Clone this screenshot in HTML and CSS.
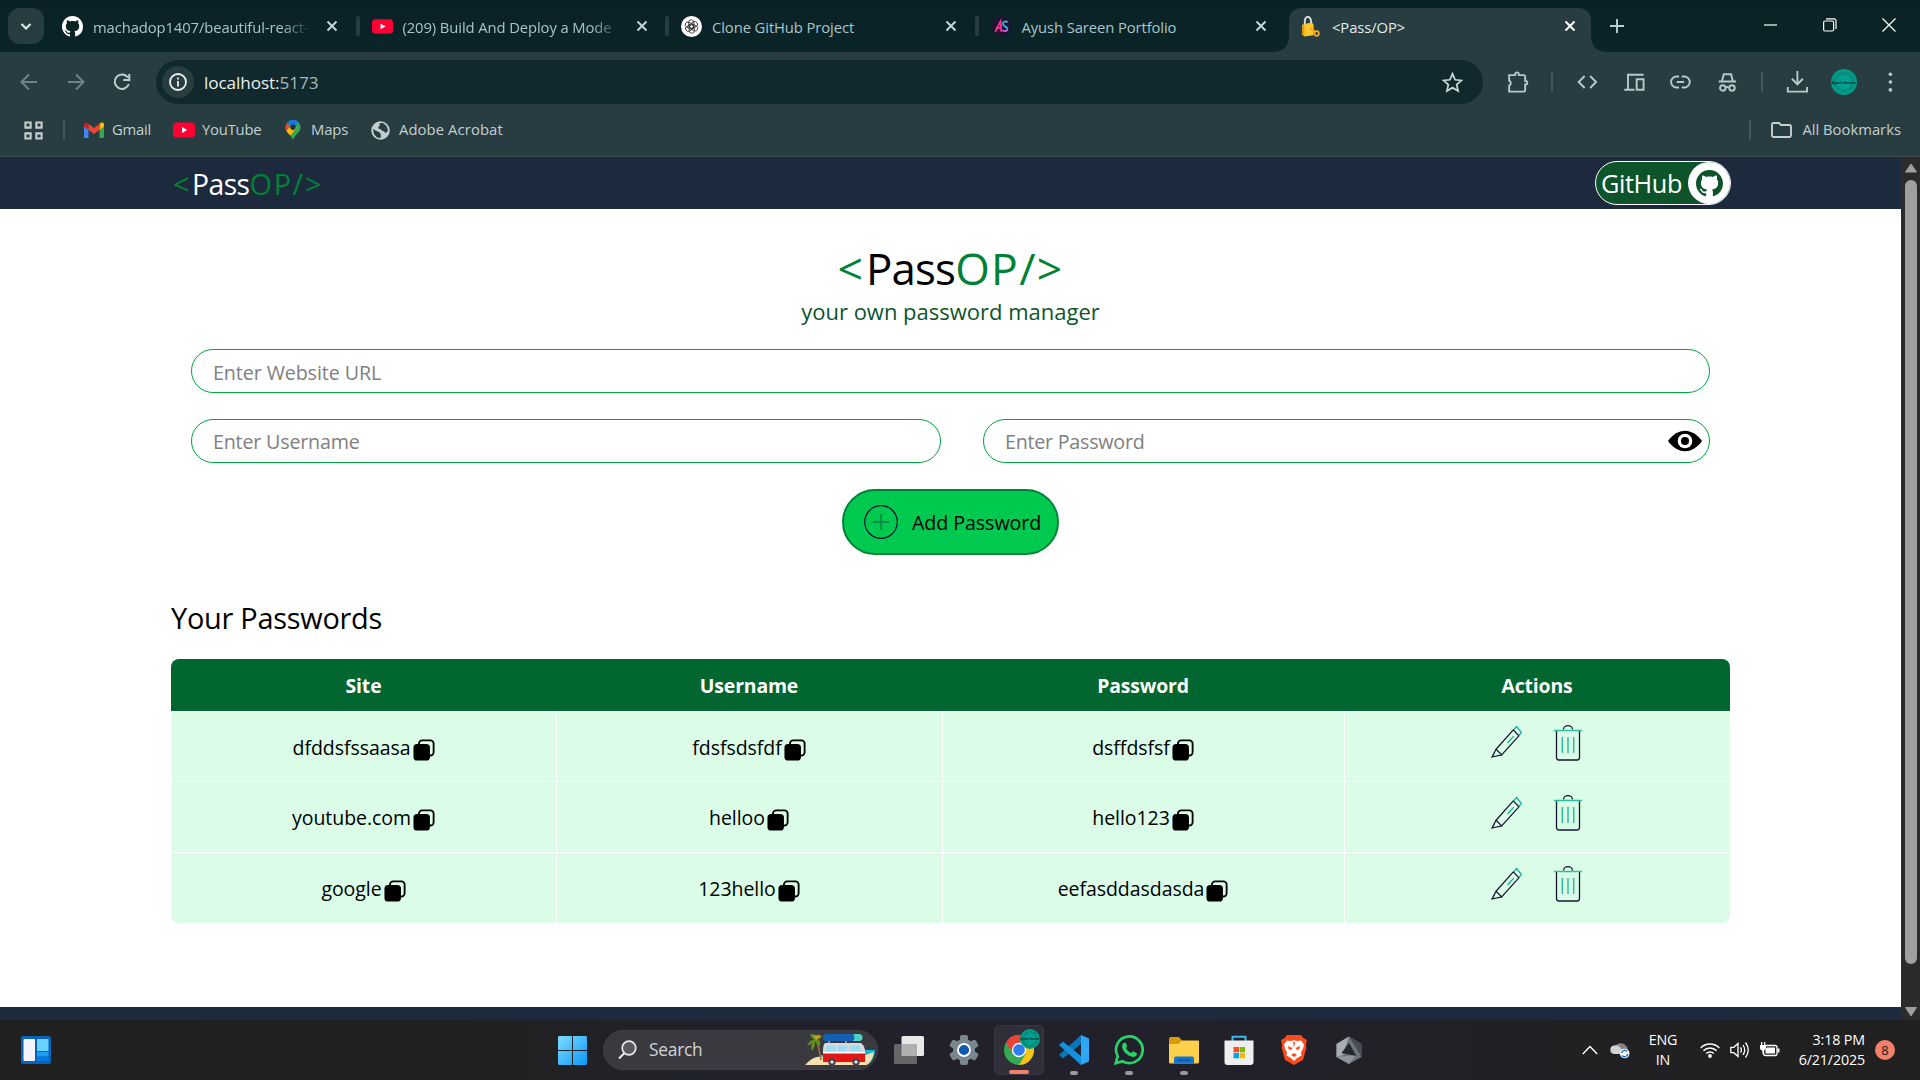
FILE: index.html
```html
<!DOCTYPE html>
<html lang="en">
<head>
<meta charset="utf-8">
<title>&lt;Pass/OP&gt;</title>
<link rel="stylesheet" href="styles.css">
</head>
<body>
<svg class="sprite" aria-hidden="true">
  <symbol id="github" viewBox="0 0 16 16"><path d="M8 0C3.58 0 0 3.58 0 8c0 3.54 2.29 6.53 5.47 7.59.4.07.55-.17.55-.38 0-.19-.01-.82-.01-1.49-2.01.37-2.53-.49-2.69-.94-.09-.23-.48-.94-.82-1.13-.28-.15-.68-.52-.01-.53.63-.01 1.08.58 1.23.82.72 1.21 1.87.87 2.33.66.07-.52.28-.87.51-1.07-1.78-.2-3.64-.89-3.64-3.95 0-.87.31-1.59.82-2.15-.08-.2-.36-1.02.08-2.12 0 0 .67-.21 2.2.82.64-.18 1.32-.27 2-.27s1.36.09 2 .27c1.53-1.04 2.2-.82 2.2-.82.44 1.1.16 1.92.08 2.12.51.56.82 1.27.82 2.15 0 3.07-1.87 3.75-3.65 3.95.29.25.54.73.54 1.48 0 1.07-.01 1.93-.01 2.2 0 .21.15.46.55.38A8.01 8.01 0 0 0 16 8c0-4.42-3.58-8-8-8z" fill="currentColor"/></symbol>
  <symbol id="youtube" viewBox="0 0 22 16"><rect width="22" height="15" y=".5" rx="3.6" fill="#ff0033"/><path d="M9 5v6l5.2-3z" fill="#fff"/></symbol>
  <symbol id="close" viewBox="0 0 12 12"><path d="M1.500 1.500l9 9m0-9l-9 9" stroke="currentColor" stroke-width="2" fill="none"/></symbol>
  <symbol id="copy" viewBox="0 0 24 24"><path d="M6.500 6V5a3.500 3.500 0 0 1 3.500-3.500h9A3.500 3.500 0 0 1 22.500 5v9.500A3.500 3.500 0 0 1 19 18H18" fill="none" stroke="#000" stroke-width="2"/><rect x=".5" y="5.500" width="18" height="18" rx="4" fill="#000"/></symbol>
  <symbol id="pencil" viewBox="0 0 32 34"><g fill="none" stroke-width="1.300"><path d="M5.200 25L23 5l5.800 6.200L11 30.800zM1 33l4.200-8 5.800 5.800zM1 33l2.600-4.500" stroke="#14142f"/><path d="M23.400 5L26.400 1.600 31.300 7.600 28.800 11M17 18.500l6.500-7" stroke="#08b394"/></g></symbol>
  <symbol id="trash" viewBox="0 0 28 36"><g fill="none"><path d="M2.500 5.500v27a2.500 2.500 0 0 0 2.500 2.500h18a2.500 2.500 0 0 0 2.500-2.500v-27M9.500 4.500a4.500 3.800 0 0 1 9 0" stroke="#14142f" stroke-width="1.300"/><path d="M0 5.500h28M8.300 12v16M14 12v16M19.700 12v16" stroke="#2cbfa0" stroke-width="1.500"/></g></symbol>
</svg>

<header class="browser">
  <div class="tabstrip">
    <button class="tabsearch"><svg width="14" height="14" viewBox="0 0 14 14"><path d="M2.500 5l4.500 4.500L11.500 5" fill="none" stroke="#dce8e8" stroke-width="2.200"/></svg></button>
    <div class="tabs">
      <div class="tab"><svg class="fav white"><use href="#github"/></svg><span class="name fade">machadop1407/beautiful-react-</span><svg class="x"><use href="#close"/></svg></div>
      <div class="tab"><svg class="fav"><use href="#youtube"/></svg><span class="name fade">(209) Build And Deploy a Mode</span><svg class="x"><use href="#close"/></svg></div>
      <div class="tab"><svg class="fav" viewBox="0 0 22 22"><circle cx="11" cy="11" r="11" fill="#fff"/><g fill="none" stroke="#333" stroke-width=".9"><rect id="knot" x="8" y="4" width="5.500" height="9" rx="2.700"/><use href="#knot" transform="rotate(60 11 11)"/><use href="#knot" transform="rotate(120 11 11)"/><use href="#knot" transform="rotate(180 11 11)"/><use href="#knot" transform="rotate(240 11 11)"/><use href="#knot" transform="rotate(300 11 11)"/></g></svg><span class="name">Clone GitHub Project</span><svg class="x"><use href="#close"/></svg></div>
      <div class="tab last"><svg class="fav" viewBox="0 0 22 22"><circle cx="11" cy="11" r="10.500" fill="#1d1530"/><g fill="none" stroke-width="1.900"><path d="M4.500 16.500L10 5.500l.8 11M5 12.500h6" stroke="#ff2f92"/><path d="M17.500 6.500c-3-2-5.500 0-5 2.200s4.500 2.300 4.800 4.800" stroke="#35b9e6"/><path d="M17.300 13.500c0 2.500-3.300 3-5.300 1.300" stroke="#d05bd8"/></g></svg><span class="name">Ayush Sareen Portfolio</span><svg class="x"><use href="#close"/></svg></div>
      <div class="tab active"><svg class="fav" viewBox="0 0 22 24"><path d="M4.500 12V6.500a3.500 5 0 0 1 7-1L12.500 11" fill="none" stroke="#d9dfe0" stroke-width="2.200"/><path d="M1.500 10l10-2.500 3 2V22L4 23.500 1.500 21z" fill="#fcc72c"/><path d="M1.500 10L4 12v11.500L1.500 21z" fill="#e39a10"/><path d="M10 13.500l7 5" stroke="#f5a623" stroke-width="2.500"/><circle cx="18" cy="20" r="2.600" fill="none" stroke="#f5a623" stroke-width="2"/></svg><span class="name">&lt;Pass/OP&gt;</span><svg class="x"><use href="#close"/></svg></div>
    </div>
    <svg class="plus" viewBox="0 0 14 14"><path d="M7 0v14M0 7h14" stroke="#bcd0d2" stroke-width="1.900"/></svg>
    <div class="winctl">
      <svg viewBox="0 0 14 14"><path d="M0 7h13" stroke="#fff" stroke-width="1.200"/></svg>
      <svg viewBox="0 0 14 14"><g fill="none" stroke="#fff" stroke-width="1.200"><rect x=".6" y="3" width="10" height="10" rx="1.500"/><path d="M3 .8h8a2 2 0 0 1 2 2V11"/></g></svg>
      <svg viewBox="0 0 14 14"><path d="M.5.5l13 13m0-13l-13 13" stroke="#fff" stroke-width="1.200"/></svg>
    </div>
  </div>

  <div class="toolbar">
    <div class="navbtns">
      <svg class="dim" viewBox="0 0 20 20"><path d="M18 10H3M10 2.500L2.500 10l7.500 7.500"/></svg>
      <svg class="dim" viewBox="0 0 20 20"><path d="M2 10h15M10 2.500l7.500 7.500L10 17.500"/></svg>
      <svg viewBox="0 0 20 20"><path d="M16.800 12a7.200 7.200 0 1 1-1-6.500M17.300 2v6h-6"/></svg>
    </div>
    <div class="omnibox">
      <span class="info"><svg viewBox="0 0 20 20"><circle cx="10" cy="10" r="8"/><path d="M10 9v5.500M10 5.500v2"/></svg></span>
      <span class="url">localhost:<i>5173</i></span>
      <svg class="star" viewBox="0 0 20 20"><path d="M10 1.800l2.500 5.600 6 .6-4.500 4 1.300 6L10 14.900 4.700 18 6 12 1.500 8l6-.6z"/></svg>
    </div>
    <div class="tools">
      <svg viewBox="0 0 24 24"><path d="M3 4.500h6.500V3.500a2 2 0 0 1 4 0v1H19A1.500 1.500 0 0 1 20.500 6v5h.5a1.700 1.700 0 0 1 0 3.600h-.5V21a1.500 1.500 0 0 1-1.500 1.500H3V16a3 3 0 0 0 0-5.500z"/></svg>
      <i class="sep"></i>
      <svg viewBox="0 0 24 24"><path d="M9 5.500L2.500 12 9 18.500M15 5.500l6.500 6.500-6.500 6.500"/></svg>
      <svg viewBox="0 0 24 24"><path d="M5 20V4h17M1 20.500h11M14.500 9h7.500v11.500h-7.500z"/></svg>
      <svg viewBox="0 0 24 24"><path d="M10.500 6H7.800a6 6 0 0 0 0 12h2.700M13.500 6h2.700a6 6 0 0 1 0 12h-2.700M8 12h8"/></svg>
      <svg viewBox="0 0 24 24"><path d="M2.500 11.500h19M6 11.500L8 3.500h8l2 8M10.200 18q1.800-1.200 3.600 0"/><circle cx="7" cy="18.500" r="3"/><circle cx="17" cy="18.500" r="3"/></svg>
      <i class="sep"></i>
      <svg viewBox="0 0 24 24"><path d="M12 0v14M6 8.500l6 6 6-6M1.500 17.500v5h21v-5"/></svg>
      <span class="avatar"><b>Ayush Sareen</b></span>
      <svg viewBox="0 0 24 24"><g class="dots"><circle cx="12" cy="3.500" r="2"/><circle cx="12" cy="12" r="2"/><circle cx="12" cy="20.500" r="2"/></g></svg>
    </div>
  </div>

  <nav class="bookmarks">
    <svg class="apps" viewBox="0 0 20 20"><g fill="none" stroke="#c7d0d1" stroke-width="2.200"><path d="M1.500 1.500h5.500V7H1.500zM13 1.500h5.500V7H13zM1.500 13h5.500v5.500H1.500zM13 13h5.500v5.500H13z"/></g></svg>
    <i class="sep"></i>
    <a class="gmail"><svg width="20" height="16" viewBox="0 0 20 16"><path d="M0 3v12a1 1 0 0 0 1 1h3.500V6z" fill="#4285f4"/><path d="M20 3v12a1 1 0 0 1-1 1h-3.500V6z" fill="#34a853"/><path d="M0 2.500C0 .5 2 0 3.400 1L4.500 1.800V8L0 4.500z" fill="#c5221f"/><path d="M20 2.500C20 .5 18 0 16.600 1l-1.100.8V8L20 4.500z" fill="#fbbc04"/><path d="M4.500 1.800L10 6l5.500-4.200V8L10 12 4.500 8z" fill="#ea4335"/></svg><span>Gmail</span></a>
    <a class="yt"><svg width="22" height="16"><use href="#youtube"/></svg><span>YouTube</span></a>
    <a class="maps"><svg width="16" height="20" viewBox="0 0 16 20"><clipPath id="pin"><path d="M8 0a7.500 7.500 0 0 1 7.500 7.500c0 5-5.500 6.500-7.500 12.500C6 14 .5 12.500.5 7.500A7.500 7.500 0 0 1 8 0z"/></clipPath><g clip-path="url(#pin)"><path d="M0 0h16v20H0z" fill="#34a853"/><path d="M0 0h16L8 8z" fill="#1a73e8"/><path d="M10 0h8v7L13 3z" fill="#4285f4"/><path d="M0 2l6 5-6 5z" fill="#ea4335"/><path d="M0 12l5-5 7 .5L4 17z" fill="#fbbc04"/></g><circle cx="8" cy="7.300" r="2.700" fill="#24343a"/></svg><span>Maps</span></a>
    <a class="adobe"><svg width="19" height="19" viewBox="0 0 19 19"><circle cx="9.500" cy="9.500" r="9.300" fill="#c3cdd0"/><path d="M9.500 2c-2 1.500 0 2.500-1.500 3.500s-.5 2.500 1 2.500 1 2 3 2 1 2.500 3.500 1.500L17 9.500 15.500 5 12 2zM2 8l4.500 2.500c1.500 1 3 .5 3 2.500s1 1.500 0 4L6 16.500 3 13z" fill="#273d41"/></svg><span>Adobe Acrobat</span></a>
    <div class="allbm"><i class="sep"></i><svg width="21" height="16" viewBox="0 0 21 16"><path d="M1 13V2.500A1.500 1.500 0 0 1 2.500 1H8l2 2h8.500A1.500 1.500 0 0 1 20 4.500V13.500A1.500 1.500 0 0 1 18.500 15h-16A1.500 1.500 0 0 1 1 13.500z" fill="none" stroke="#c7d0d1" stroke-width="1.900"/></svg><span>All Bookmarks</span></div>
  </nav>
</header>

<div class="viewport">
  <div class="page">
    <nav class="navbar">
      <div class="brand"><em>&lt;</em>Pass<em>OP/&gt;</em></div>
      <button class="ghbtn"><span>GitHub</span><span class="disc"><svg><use href="#github"/></svg></span></button>
    </nav>
    <main class="manager">
      <h1><em>&lt;</em>Pass<em>OP/&gt;</em></h1>
      <p class="tagline">your own password manager</p>
      <div class="form">
        <div class="field">Enter Website URL</div>
        <div class="pair">
          <div class="field user">Enter Username</div>
          <div class="field pass">Enter Password<svg width="34" height="22" viewBox="0 0 34 22"><path d="M0 11C10-2.700 24-2.700 34 11 24 24.700 10 24.700 0 11z" fill="#000"/><circle cx="17" cy="11" r="7.300" fill="#fff"/><circle cx="17" cy="11" r="4" fill="#000"/></svg></div>
        </div>
        <button class="add"><svg width="34" height="34" viewBox="0 0 34 34" fill="none"><circle cx="17" cy="17" r="16.300" stroke="#121331" stroke-width="1.200"/><path d="M17 9v16M9 17h16" stroke="#087b3b" stroke-width="1.300"/></svg><span>Add Password</span></button>
      </div>
      <h2>Your Passwords</h2>
      <table class="vault">
        <colgroup><col class="c1"><col class="c2"><col class="c3"><col class="c4"></colgroup>
        <thead><tr><th>Site</th><th>Username</th><th>Password</th><th>Actions</th></tr></thead>
        <tbody>
          <tr>
            <td><div class="cell"><span>dfddsfssaasa</span><svg><use href="#copy"/></svg></div></td>
            <td><div class="cell"><span>fdsfsdsfdf</span><svg><use href="#copy"/></svg></div></td>
            <td><div class="cell"><span>dsffdsfsf</span><svg><use href="#copy"/></svg></div></td>
            <td><div class="acts"><svg class="pen"><use href="#pencil"/></svg><svg class="bin"><use href="#trash"/></svg></div></td>
          </tr>
          <tr>
            <td><div class="cell"><span>youtube.com</span><svg><use href="#copy"/></svg></div></td>
            <td><div class="cell"><span>helloo</span><svg><use href="#copy"/></svg></div></td>
            <td><div class="cell"><span>hello123</span><svg><use href="#copy"/></svg></div></td>
            <td><div class="acts"><svg class="pen"><use href="#pencil"/></svg><svg class="bin"><use href="#trash"/></svg></div></td>
          </tr>
          <tr>
            <td><div class="cell"><span>google</span><svg><use href="#copy"/></svg></div></td>
            <td><div class="cell"><span>123hello</span><svg><use href="#copy"/></svg></div></td>
            <td><div class="cell"><span>eefasddasdasda</span><svg><use href="#copy"/></svg></div></td>
            <td><div class="acts"><svg class="pen"><use href="#pencil"/></svg><svg class="bin"><use href="#trash"/></svg></div></td>
          </tr>
        </tbody>
      </table>
    </main>
    <footer class="pagefoot"></footer>
  </div>
  <div class="scrollbar">
    <svg width="12" height="10" viewBox="0 0 12 10"><path d="M6 1l5.500 8H.5z" fill="#9f9f9f" stroke="#9f9f9f" stroke-linejoin="round"/></svg>
    <i class="thumb"></i>
    <svg class="down" width="14" height="11" viewBox="0 0 14 11"><path d="M7 10L1.500 1.500h11z" fill="#9f9f9f" stroke="#9f9f9f" stroke-linejoin="round"/></svg>
  </div>
</div>

<footer class="taskbar">
  <svg class="widgets" viewBox="0 0 30 28"><rect width="30" height="28" rx="2" fill="#0b63b8"/><rect x="2.500" y="3" width="11.500" height="22" rx="1" fill="#f2f5fa"/><path d="M16 3h11.500v12H16z" fill="#66d4ff"/><path d="M16 16h11.500v4.500H16z" fill="#1aa0f5"/><path d="M16 21h11.500v4H16z" fill="#0078e0"/></svg>
  <svg class="start" viewBox="0 0 29 29"><defs><linearGradient id="win" x1="0" y1="0" x2="1" y2="1"><stop offset="0" stop-color="#7fdcff"/><stop offset="1" stop-color="#0a98f8"/></linearGradient></defs><path d="M1 0h13v14H0V1zM15 0h13l1 1v13H15zM0 15h14v14H1l-1-1zM15 15h14v13l-1 1H15z" fill="url(#win)"/></svg>
  <div class="search">
    <svg class="lens" width="20" height="20" viewBox="0 0 20 20"><circle cx="12" cy="8" r="6.800" fill="#5a595f" stroke="#e8e8e8" stroke-width="1.700"/><path d="M7.200 13.200L2 18.500" stroke="#e8e8e8" stroke-width="2"/></svg>
    <span>Search</span>
    <svg class="art" width="71" height="34" viewBox="0 0 71 34"><path d="M58 17h12c-.5 7-3 11-6 14H7L16 22h42z" fill="#10bcd2"/><path d="M0 32C6 25 12 22 22 24c14 3 30 2 47-5-1 7-4 10-7 13z" fill="#f5deb0"/><path d="M10 6c4 6 5 14 6 21" fill="none" stroke="#9a6b3a" stroke-width="1.600"/><path d="M10 7C7 6 4 8 2 13c3-1 4-2 5-3-1 3-1 5 0 8 3-4 3-7 3-9 2 0 3 2 4 5 2-3 2-6-1-7 2-1 3-2 4-4-3-2-5-2-7 0-1-2-3-2-5-2 1 3 2 5 5 6z" fill="#5f8f1b"/><path d="M8 2l8 1-5 4z" fill="#c9a31b"/><rect x="18" y="1" width="29" height="7" rx="3.500" fill="#1261b5"/><path d="M36 1h8a3.500 3.500 0 0 1 0 7h-8c3-2 3-5 0-7z" fill="#48d3c6"/><path d="M24 8v3M41 8v3" stroke="#aaa" stroke-width="1.500"/><path d="M20 10h27c12 2 14 5 14 9H17c0-4 1-7 3-9z" fill="#d9dadd" class="off"/><path d="M20 10h36c3 2 4 5 4 9H18c0-4 0-7 2-9z" fill="#d9dadd"/><path d="M21 12.500h10V18H21zM33 12.500h9V18h-9zM44 12.500h10l3 5.500H44z" fill="#9fdcf2"/><path d="M18 19h42v10H18z" fill="#e31414"/><path d="M18 19h42v1.500H18z" fill="#fff"/><circle cx="27" cy="29" r="3.700" fill="#494349"/><circle cx="27" cy="29" r="1.600" fill="#eee"/><circle cx="51" cy="29" r="3.700" fill="#494349"/><circle cx="51" cy="29" r="1.600" fill="#eee"/><path d="M44 1h10a3.500 3.500 0 0 1 0 7H44z" fill="#48d3c6"/><path d="M30 1h18q3 3.500 0 7H30z" fill="#1261b5"/></svg>
  </div>
  <div class="approw">
    <div class="app"><svg viewBox="0 0 30 30"><rect x="7.500" y="1" width="22.500" height="20" rx="1.500" fill="#e9e9ea"/><rect x="0" y="9" width="23" height="20" rx="1.500" fill="#676767"/><path d="M7.500 9H23v12H7.500z" fill="#b0b0b0"/></svg></div>
    <div class="app"><svg viewBox="0 0 30 30"><g fill="#7b8790"><circle cx="15" cy="15" r="11"/><g id="teeth"><rect x="11" y="0" width="8" height="30" rx="2"/></g><use href="#teeth" transform="rotate(60 15 15)"/><use href="#teeth" transform="rotate(120 15 15)"/></g><circle cx="15" cy="15" r="6" fill="#0e5db0" stroke="#fff" stroke-width="1.800"/></svg></div>
    <div class="app current"><svg viewBox="0 0 30 30"><circle cx="15" cy="15" r="15" fill="#34a853"/><path d="M15 0a15 15 0 0 1 13 7.500L15 8 8.700 18.600 2 7.500A15 15 0 0 1 15 0z" fill="#ea4335"/><path d="M28 7.500A15 15 0 0 1 15 30L22 18.500 22 11 15 7.500z" fill="#fbc116"/><circle cx="15" cy="15" r="7.200" fill="#fff"/><circle cx="15" cy="15" r="5.800" fill="#2f7cf0"/></svg><span class="badge"><b>Ayush Sareen</b></span><i class="bar wide"></i></div>
    <div class="app"><svg viewBox="0 0 30 30"><path d="M22 0v9L4 23.500 0 20z" fill="#0877b9"/><path d="M0 10l4-3.500L22 21v9L0 10z" fill="#1590dd"/><path d="M22 0l8 3.500v23L22 30z" fill="#2ea8f4"/></svg><i class="bar"></i></div>
    <div class="app"><svg viewBox="0 0 30 30"><path d="M1.800 28.200l1.900-7A13.300 13.300 0 1 1 8.700 26.300z" fill="none" stroke="#25d366" stroke-width="2.700"/><path d="M9.500 8c1-1 2-.7 2.400.2l1.200 2.800c.3.700-1.200 2-.9 2.600 1 2 2.700 3.500 4.800 4.300.8.300 1.800-1.800 2.500-1.500l3 1.500c1 .6 0 2.700-1 3.400-2 1.300-4.700.6-7.600-1.200-2.500-1.500-4-3.500-5-5.500-1.200-2.500-1-5.200.6-6.600z" fill="#25d366"/></svg><i class="bar"></i></div>
    <div class="app"><svg viewBox="0 0 30 30"><path d="M0 4a2 2 0 0 1 2-2h8l3 3.500-4 4H0z" fill="#d99a07"/><path d="M0 9h9l3.500-3.500H30V27a1.500 1.500 0 0 1-1.500 1.500h-27A1.500 1.500 0 0 1 0 27z" fill="#ffd04a"/><path d="M5 28.500v-5a2 2 0 0 1 2-2h16a2 2 0 0 1 2 2v5z" fill="#1374ce"/><path d="M9 25.300h12" stroke="#0a4e96" stroke-width="1.200"/></svg><i class="bar"></i></div>
    <div class="app"><svg viewBox="0 0 30 30"><path d="M8.500 6V1.800h13V6" fill="none" stroke="#35bdf3" stroke-width="2"/><path d="M.5 5.500h29V27a3 3 0 0 1-3 3h-23a3 3 0 0 1-3-3z" fill="#eeeeef"/><path d="M9.500 12H15v5.300H9.500z" fill="#f25022"/><path d="M15.700 12h5.300v5.300h-5.300z" fill="#7fba00"/><path d="M9.500 18H15v5.300H9.500z" fill="#00a4ef"/><path d="M15.700 18h5.300v5.300h-5.300z" fill="#ffb900"/></svg></div>
    <div class="app"><svg viewBox="0 0 30 30"><path d="M8 0h14l2.500 3L28 5l-1 4 .3 4-3.300 12-9 5-9-5L2.700 13 3 9 2 5l3.500-2z" fill="#fb4a1c"/><path d="M8 5.500l4 .5 3-.7 3 .7 4-.5 3 4-1 4-2 4 .5 3-4.500 2.500L15 26l-3-3-4.500-2.500L8 17.500l-2-4-1-4z" fill="#fff"/><path d="M9 11l4.500 2-1.500 2-2.500-1zM21 11l-4.500 2 1.500 2 2.500-1zM12 20l3-2 3 2-3 2zM14 7l1 6 1-6z" fill="#fb4a1c"/></svg></div>
    <div class="app"><svg viewBox="0 0 30 30"><path d="M15 1.500L27.500 9v13L15 29 2.500 22V9z" fill="#6e747b"/><path d="M15 1.500L27.500 9v13L15 1.500z" fill="#474c52"/><path d="M2.500 9L15 1.500 9 20l-6.500 2z" fill="#a7aeb4"/><path d="M2.500 22L22 20l-7 9z" fill="#8f969c"/><path d="M15 8l7.500 13L7.500 18z" fill="#26272b"/></svg></div>
  </div>
  <div class="tray">
    <svg class="chev" width="16" height="10" viewBox="0 0 16 10"><path d="M.8 9L8 1.500 15.200 9" fill="none" stroke="#fff" stroke-width="1.400"/></svg>
    <svg class="cloud" width="20" height="18" viewBox="0 0 20 18"><path d="M6 4a6 5 0 0 1 10 1c2 1 2 4 1 6l-7 2z" fill="#858585"/><path d="M4 13a4.300 4.300 0 0 1 0-8.500c3-1 6 1 7 3l3 5.500z" fill="#d2d2d2"/><circle cx="14.700" cy="12.500" r="4.800" fill="#fff"/><path d="M11.600 12a3.200 3.200 0 0 1 5.700-1.500M17.800 13a3.200 3.200 0 0 1-5.700 1.500" stroke="#1a6fc9" stroke-width="1.500" fill="none"/></svg>
    <div class="lang">ENG<br>IN</div>
    <svg class="wifi" width="20" height="16" viewBox="0 0 20 16"><g fill="none" stroke="#fff" stroke-width="1.500"><path d="M.7 6a13 13 0 0 1 18.600 0M3.400 8.800a9.300 9.300 0 0 1 13.200 0M6.200 11.500a5.500 5.500 0 0 1 7.600 0"/></g><circle cx="10" cy="14" r="1.900" fill="#fff"/></svg>
    <svg class="vol" width="20" height="18" viewBox="0 0 20 18"><g fill="none" stroke="#fff" stroke-width="1.300"><path d="M.8 6.300h3L8 2.500v13l-4.200-3.800h-3zM10.500 6.300q1.800 2.700 0 5.400M13 4q3.400 5 0 10M15.500 1.500q5.500 7.500 0 15"/></g></svg>
    <svg class="batt" width="20" height="18" viewBox="0 0 20 18"><path d="M6 4.500h9a2 2 0 0 1 2 2v6a2 2 0 0 1-2 2H5.500a2 2 0 0 1-2-2v-2" fill="none" stroke="#fff" stroke-width="1.300"/><path d="M6.500 6.500H15v6H5.500v-3zM17.500 7.500h2v4h-2zM0 4h6v3c0 1.500-1 2.500-2 2.500v3H2.300v-3C1 9.500 0 8.500 0 7zM1 1h1.300v3H1zM4 1h1.300v3H4z" fill="#fff"/></svg>
    <div class="clock">3:18 PM<br>6/21/2025</div>
    <span class="count">8</span>
  </div>
</footer>
</body>
</html>
```
FILE: styles.css
```css
* { box-sizing: border-box; }
body {
  margin: 0;
  width: 1920px;
  height: 1080px;
  overflow: hidden;
  display: flex;
  flex-direction: column;
  font-family: "Open Sans", "Noto Sans", sans-serif;
  background: #fff;
}
button { font: inherit; border: 0; padding: 0; margin: 0; }
em, i { font-style: normal; }
svg { flex: none; display: block; }
.sprite { position: absolute; width: 0; height: 0; }

/* browser chrome */
.browser {
  height: 157px;
  flex: none;
  background: #273d41;
  border-bottom: 1px solid #3f4d4e;
  display: flex;
  flex-direction: column;
}
.tabstrip {
  height: 52px;
  flex: none;
  background: linear-gradient(#0a2226, #0a2428);
  padding: 8px 0 0 8px;
  display: flex;
  align-items: flex-start;
}
.tabsearch {
  width: 36px;
  height: 36px;
  border-radius: 12px;
  background: #273d41;
  display: grid;
  place-items: center;
}
.tabs { display: flex; margin-left: 4px; height: 44px; }
.tab {
  width: 309.5px;
  height: 36px;
  padding-left: 14px;
  display: flex;
  align-items: center;
  color: #a9c5c9;
  font-size: 14.8px;
  letter-spacing: -.1px;
  position: relative;
}
.tab::after {
  content: "";
  position: absolute;
  right: -2px;
  top: 8px;
  width: 4px;
  height: 20px;
  border-radius: 2px;
  background: #273d41;
}
.tab.last { width: 312.5px; }
.tab.last::after { display: none; }
.fav { width: 21px; height: 21px; margin-right: 10px; }
.fav.white { color: #fff; }
.name { width: 219px; white-space: nowrap; overflow: hidden; line-height: 24px; padding-top: 1px; }
.fade { mask-image: linear-gradient(90deg, #000 86%, transparent); -webkit-mask-image: linear-gradient(90deg, #000 86%, transparent); }
.x { width: 12px; height: 12px; margin-left: 14px; color: #c3d6d8; }
.tab.active {
  width: 302px;
  height: 44px;
  padding: 0 0 8px 11px;
  background: #273d41;
  border-radius: 12px 12px 0 0;
  color: #e3ecec;
}
.tab.active::before, .tab.active::after {
  display: block;
  position: absolute;
  top: auto;
  bottom: 0;
  width: 14px;
  height: 14px;
  background: radial-gradient(circle at 0 0, transparent 13.5px, #273d41 14px);
  border-radius: 0;
}
.tab.active::before { content: ""; left: -14px; }
.tab.active::after { right: -14px; background: radial-gradient(circle at 100% 0, transparent 13.5px, #273d41 14px); }
.active .x { color: #fff; margin-left: 13px; }
.active .name { margin-left: 1px; }
.plus { width: 14px; height: 14px; margin: 11px 0 0 19px; }
.winctl { margin: 10px 24px 0 auto; display: flex; gap: 45px; }
.winctl svg { width: 14px; height: 14px; }

.toolbar { height: 60px; display: flex; align-items: center; padding-left: 6px; }
.navbtns { display: flex; width: 150px; }
.navbtns svg { width: 20px; height: 20px; margin: 0 13.300px; fill: none; stroke: #bcd0d2; stroke-width: 2; }
.navbtns .dim { stroke: #6f8487; }
.omnibox {
  width: 1327px;
  height: 44px;
  border-radius: 22px;
  background: #11292d;
  display: flex;
  align-items: center;
  padding-left: 6px;
}
.info { width: 32px; height: 32px; border-radius: 50%; background: #273d41; display: grid; place-items: center; }
.info svg { width: 20px; height: 20px; fill: none; stroke: #eaf1f1; stroke-width: 1.800; }
.url { margin-left: 10px; font-size: 17.2px; letter-spacing: -.1px; color: #e8eeee; flex: 1; }
.url i { color: #a6b8ba; }
.star { width: 21px; height: 21px; margin-right: 20px; fill: none; stroke: #c7d7d8; stroke-width: 1.700; }
.tools { display: flex; align-items: center; margin-left: 11px; }
.tools svg { width: 46.800px; height: 22px; fill: none; stroke: #b4cacc; stroke-width: 2.100; }
.tools .dots { fill: #b4cacc; stroke: none; }
.sep { width: 2px; height: 20px; border-radius: 1px; background: #42585c; flex: none; }
.tools .sep { margin: 0 10.500px; }
.avatar, .badge { border-radius: 50%; background: radial-gradient(circle, #00a18e 38%, #078474 42%, #009b89 48%, #078474 52%, #009b89 58%); display: grid; place-items: center; overflow: hidden; }
.avatar { width: 26px; height: 26px; margin: 0 10px; }
.avatar b, .badge b { font-size: 3.600px; line-height: 5px; color: #03322d; white-space: nowrap; }

.bookmarks { height: 36px; display: flex; align-items: center; padding: 0 19px 0 24px; color: #c4cfd0; font-size: 14.800px; letter-spacing: 0; }
.bookmarks span { padding-bottom: 2px; }
.bookmarks a { display: flex; align-items: center; gap: 8px; white-space: nowrap; }
.apps { width: 19px; height: 19px; margin-right: 20px; }
.gmail { margin-left: 19px; width: 89px; letter-spacing: -.2px; }
.bookmarks .yt { width: 112px; gap: 7px; letter-spacing: -.2px; }
.bookmarks .maps { width: 86px; gap: 10px; letter-spacing: -.1px; }
.bookmarks .adobe { gap: 9px; letter-spacing: .1px; }
.allbm { margin-left: auto; display: flex; align-items: center; }
.allbm svg { margin: 0 10px 0 20px; }

/* page */
.viewport { height: 863px; flex: none; display: flex; }
.page { width: 1901px; display: flex; flex-direction: column; }
.navbar {
  height: 52px;
  flex: none;
  background: #1d293d;
  padding: 0 170px 0 173px;
  display: flex;
  align-items: center;
  justify-content: space-between;
}
.brand { color: #fff; font-size: 28.300px; letter-spacing: -.5px; line-height: 40px; height: 42px; padding-top: 2px; }
.brand em, h1 em { color: #008236; }
.brand em { letter-spacing: 1.5px; font-size: 29px; }
.brand em:first-child { letter-spacing: 2.300px; }
.ghbtn {
  width: 136px;
  height: 44px;
  border: 1px solid #fff;
  border-radius: 22px;
  background: #0d542b;
  color: #fff;
  font-size: 25.300px;
  letter-spacing: -.4px;
  display: flex;
  align-items: center;
  justify-content: space-between;
  padding-left: 5px;
  line-height: 40px;
}
.disc { width: 42px; height: 42px; border-radius: 50%; background: #fff; display: grid; place-items: center; }
.disc svg { width: 27px; height: 27px; color: #0d542b; }

.manager { width: 1559px; margin-left: 171px; display: flex; flex-direction: column; flex: 1; }
h1 { margin: 33px 0 0; height: 53px; text-align: center; font-weight: 400; font-size: 43.800px; letter-spacing: -.8px; line-height: 52px; color: #000; }
h1 em { letter-spacing: 1.3px; font-size: 44.500px; }
h1 em:first-child { letter-spacing: 3px; }
.tagline { margin: 0; text-align: center; font-size: 22px; line-height: 32px; color: #0d542b; }
.form { padding: 22px 20px 0; display: flex; flex-direction: column; gap: 26px; }
.field {
  height: 44px;
  border: 1px solid #00a63e;
  border-radius: 22px;
  padding: 2px 0 0 21px;
  color: #808080;
  font-size: 19.700px;
  letter-spacing: -.1px;
  display: flex;
  align-items: center;
}
.pair { display: flex; gap: 42px; }
.user { width: 750px; padding-top: 0; letter-spacing: -.2px; }
.pass { width: 727px; justify-content: space-between; padding: 0 7px 0 21px; letter-spacing: -.25px; }
.add {
  align-self: center;
  width: 217px;
  height: 66px;
  border: 2px solid #008236;
  border-radius: 33px;
  background: #00c950;
  display: flex;
  align-items: center;
  padding-left: 20px;
  gap: 14px;
  font-size: 19.700px;
  letter-spacing: -.1px;
  color: #000;
}
h2 { margin: 42px 0 20px; font-weight: 400; font-size: 28.900px; line-height: 42px; letter-spacing: -.25px; color: #000; }

.vault { width: 1559px; table-layout: fixed; border-spacing: 0; border-radius: 8px; overflow: hidden; font-size: 19.500px; letter-spacing: -.05px; color: #000; }
.c1 { width: 385px; }
.c2 { width: 386px; }
.c3 { width: 402px; }
.c4 { width: 386px; }
th { height: 52px; padding: 0; background: #016630; color: #fff; font-weight: 700; font-size: 19.400px; letter-spacing: -.15px; }
td { height: 71px; padding: 0; background: #dbfce7; border-top: 1px solid #fff; border-left: 1px solid #fff; }
tr:first-child td { height: 70px; }
td:first-child { border-left-color: #eefdf3; }
.cell { display: flex; align-items: center; justify-content: center; gap: 2px; padding: 1px 1px 0 0; }
.cell svg { width: 22px; height: 22px; margin-top: 5px; }
.acts { display: flex; justify-content: center; align-items: center; gap: 32px; height: 36px; margin-bottom: 8px; padding-right: 2px; }
.pen { width: 31px; height: 33px; margin-bottom: 2px; }
.bin { width: 28px; height: 36px; }
.pagefoot { height: 13px; background: #1d293d; flex: none; }

.scrollbar { width: 19px; background: #2b2b2b; display: flex; flex-direction: column; align-items: center; padding: 6px 0 3px; }
.thumb { width: 12px; height: 784px; margin-top: 7px; border-radius: 6px; background: #9f9f9f; }
.down { margin-top: auto; }

/* taskbar */
.taskbar {
  height: 60px;
  flex: none;
  background: linear-gradient(90deg, #202020, #212122 25%, #22212b 40%, #22212b 60%, #212024 80%, #202020);
  display: flex;
  align-items: center;
  color: #fff;
}
.widgets { width: 30px; height: 28px; margin-left: 21px; }
.start { width: 29px; height: 29px; margin-left: 507px; }
.search { width: 275px; height: 40px; margin-left: 16px; border-radius: 20px; background: #3a3940; border: 1px solid #414047; display: flex; align-items: center; overflow: hidden; color: #d4d4d6; font-size: 17.300px; letter-spacing: -.2px; }
.search span { padding-bottom: 2px; }
.lens { margin: 0 12px 0 13px; }
.art { margin-left: auto; margin-right: 1px; }
.off { display: none; }
.approw { display: flex; gap: 5px; margin-left: 6px; }
.app { width: 50px; height: 50px; display: grid; place-items: center; position: relative; border-radius: 5px; }
.app svg { width: 30px; height: 30px; }
.current { background: #302f39; border: 1px solid #383741; }
.badge { position: absolute; left: 25px; top: 3px; width: 20px; height: 20px; }
.badge b { font-size: 2.800px; }
.bar { position: absolute; left: 21px; bottom: 0; width: 8px; height: 4px; border-radius: 2px; background: #9a999e; }
.bar.wide { left: 14px; width: 20px; background: #f5806a; }
.tray { margin-left: auto; display: flex; align-items: center; font-size: 14.300px; line-height: 20px; letter-spacing: -.15px; padding-right: 25px; }
.cloud { margin-left: 12px; }
.lang { width: 36px; margin-left: 15px; text-align: center; }
.wifi { margin-left: 19px; }
.vol { margin-left: 10px; }
.batt { margin-left: 10px; }
.clock { width: 76px; margin-left: 9px; text-align: right; }
.count { width: 20px; height: 20px; border-radius: 50%; background: #f5806a; color: #1b1b1b; margin-left: 10px; text-align: center; font-size: 13px; line-height: 20px; }
```
